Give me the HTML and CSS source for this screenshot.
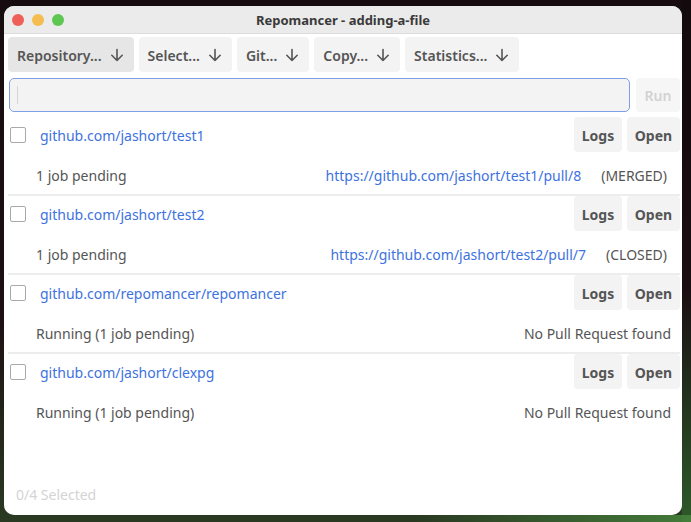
FILE: index.html
```html
<!DOCTYPE html>
<html>
<head>
<meta charset="utf-8">
<link rel="stylesheet" href="styles.css">
</head>
<body>
<div class="window">
  <div class="titlebar">
    <div class="lights">
      <span class="light red"></span>
      <span class="light yellow"></span>
      <span class="light green"></span>
    </div>
    <div class="title">Repomancer - adding-a-file</div>
  </div>
  <div class="content">
    <div class="toolbar">
      <button class="tbtn active">Repository... <svg class="arrow" viewBox="0 0 14 14"><path d="M7 1.5V12.5M1.8 7.3L7 12.5L12.2 7.3"/></svg></button>
      <button class="tbtn">Select... <svg class="arrow" viewBox="0 0 14 14"><path d="M7 1.5V12.5M1.8 7.3L7 12.5L12.2 7.3"/></svg></button>
      <button class="tbtn">Git... <svg class="arrow" viewBox="0 0 14 14"><path d="M7 1.5V12.5M1.8 7.3L7 12.5L12.2 7.3"/></svg></button>
      <button class="tbtn">Copy... <svg class="arrow" viewBox="0 0 14 14"><path d="M7 1.5V12.5M1.8 7.3L7 12.5L12.2 7.3"/></svg></button>
      <button class="tbtn">Statistics... <svg class="arrow" viewBox="0 0 14 14"><path d="M7 1.5V12.5M1.8 7.3L7 12.5L12.2 7.3"/></svg></button>
    </div>
    <div class="cmdrow">
      <div class="cmdinput"><span class="caret"></span></div>
      <button class="runbtn">Run</button>
    </div>
    <div class="list">
      <div class="repo">
        <div class="line1">
          <span class="check"></span>
          <a class="repolink">github.com/jashort/test1</a>
          <div class="actions"><button class="abtn logs">Logs</button><button class="abtn open">Open</button></div>
        </div>
        <div class="line2">
          <span class="status">1 job pending</span>
          <a class="prlink">https://github.com/jashort/test1/pull/8</a>
          <span class="prstate">(MERGED)</span>
        </div>
      </div>
      <div class="repo">
        <div class="line1">
          <span class="check"></span>
          <a class="repolink">github.com/jashort/test2</a>
          <div class="actions"><button class="abtn logs">Logs</button><button class="abtn open">Open</button></div>
        </div>
        <div class="line2">
          <span class="status">1 job pending</span>
          <a class="prlink">https://github.com/jashort/test2/pull/7</a>
          <span class="prstate">(CLOSED)</span>
        </div>
      </div>
      <div class="repo">
        <div class="line1">
          <span class="check"></span>
          <a class="repolink">github.com/repomancer/repomancer</a>
          <div class="actions"><button class="abtn logs">Logs</button><button class="abtn open">Open</button></div>
        </div>
        <div class="line2">
          <span class="status">Running (1 job pending)</span>
          <span class="nopr">No Pull Request found</span>
        </div>
      </div>
      <div class="repo last">
        <div class="line1">
          <span class="check"></span>
          <a class="repolink">github.com/jashort/clexpg</a>
          <div class="actions"><button class="abtn logs">Logs</button><button class="abtn open">Open</button></div>
        </div>
        <div class="line2">
          <span class="status">Running (1 job pending)</span>
          <span class="nopr">No Pull Request found</span>
        </div>
      </div>
    </div>
    <div class="footer">0/4 Selected</div>
  </div>
</div>
</body>
</html>
```

FILE: styles.css
```css
* { box-sizing: border-box; }
html, body { margin: 0; height: 100%; }
body {
  width: 691px;
  height: 522px;
  overflow: hidden;
  padding: 6px 9px 7px 4px;
  background:
    linear-gradient(90deg, rgba(60,120,50,0) 0%, rgba(60,120,50,0) 60%, rgba(70,130,60,0.9) 100%) bottom / 100% 7px no-repeat,
    linear-gradient(180deg, #120a0d 0%, #1a0e12 55%, #2d5a2a 100%) right / 9px 100% no-repeat,
    linear-gradient(180deg, #160c10 0%, #1d0f13 60%, #2a3a22 100%);
  font-family: "Noto Sans", "Open Sans", sans-serif;
}
.window {
  width: 678px;
  height: 509px;
  background: #fff;
  border-radius: 10px;
  overflow: hidden;
  display: flex;
  flex-direction: column;
}
.titlebar {
  height: 28px;
  background: #ebebeb;
  border-bottom: 1px solid #dcdcdc;
  display: flex;
  align-items: center;
  position: relative;
  flex: none;
}
.lights { display: flex; gap: 8px; padding-left: 8px; }
.light { width: 12px; height: 12px; border-radius: 50%; display: block; }
.red { background: #ee5f57; }
.yellow { background: #f5bd4f; }
.green { background: #5ec752; }
.title {
  position: absolute;
  left: 0; right: 0; top: 0; bottom: 0;
  display: flex; align-items: center; justify-content: center;
  font-size: 13px;
  font-weight: 700;
  color: #3a3a3a;
  padding-top: 1px;
}
.content {
  flex: 1;
  padding: 3px 2px 0 4px;
  display: flex;
  flex-direction: column;
}
.toolbar { display: flex; gap: 5px; }
button {
  font-family: inherit;
  border: none;
  cursor: default;
}
.tbtn {
  height: 35px;
  background: #f3f3f3;
  border-radius: 4px;
  padding: 1px 10px 0 9px;
  font-size: 14px;
  font-weight: 600;
  color: #555;
  display: flex;
  align-items: center;
  gap: 8px;
}
.tbtn.active { background: #e6e6e6; }
.arrow { width: 14px; height: 14px; fill: none; stroke: #555; stroke-width: 1.6; stroke-linecap: round; stroke-linejoin: round; }
.cmdrow { display: flex; gap: 6px; margin-top: 6px; padding-left: 1px; }
.cmdinput {
  flex: 1;
  height: 34px;
  border: 1px solid #7e9ee6;
  background: #f3f3f3;
  border-radius: 5px;
  display: flex;
  align-items: center;
  padding-left: 7px;
}
.caret { width: 1px; height: 18px; background: #d6d6d6; display: block; }
.runbtn {
  width: 44px;
  height: 34px;
  background: #f6f6f6;
  border-radius: 4px;
  font-size: 14px;
  font-weight: 600;
  color: #d2d2d2;
  padding: 0;
}
.list { margin-top: 5px; }
.repo { border-bottom: 2px solid #ededed; }
.repo.last { border-bottom: none; }
.line1 { display: flex; align-items: center; height: 35px; }
.check {
  width: 16px; height: 16px;
  border: 1.5px solid #a9a9a9;
  border-radius: 2px;
  margin-left: 2px;
  flex: none;
}
.repolink {
  margin-left: 14px;
  font-size: 14px;
  color: #3d72df;
  padding-top: 1px;
}
.actions { margin-left: auto; display: flex; gap: 5px; }
.abtn {
  height: 35px;
  background: #f3f3f3;
  border-radius: 4px;
  font-size: 14px;
  font-weight: 700;
  color: #555;
  padding: 1px 0 0;
}
.logs { width: 48px; }
.open { width: 53px; }
.line2 {
  display: flex;
  align-items: center;
  height: 42px;
  padding: 4px 9px 0 28px;
  font-size: 14px;
  color: #555;
}
.status { flex: 1; }
.prlink { color: #3d72df; }
.prstate { margin-left: 20px; margin-right: 4px; }
.footer {
  margin-top: auto;
  height: 30px;
  padding-left: 8px;
  font-size: 14px;
  color: #d4d4d4;
}
```
